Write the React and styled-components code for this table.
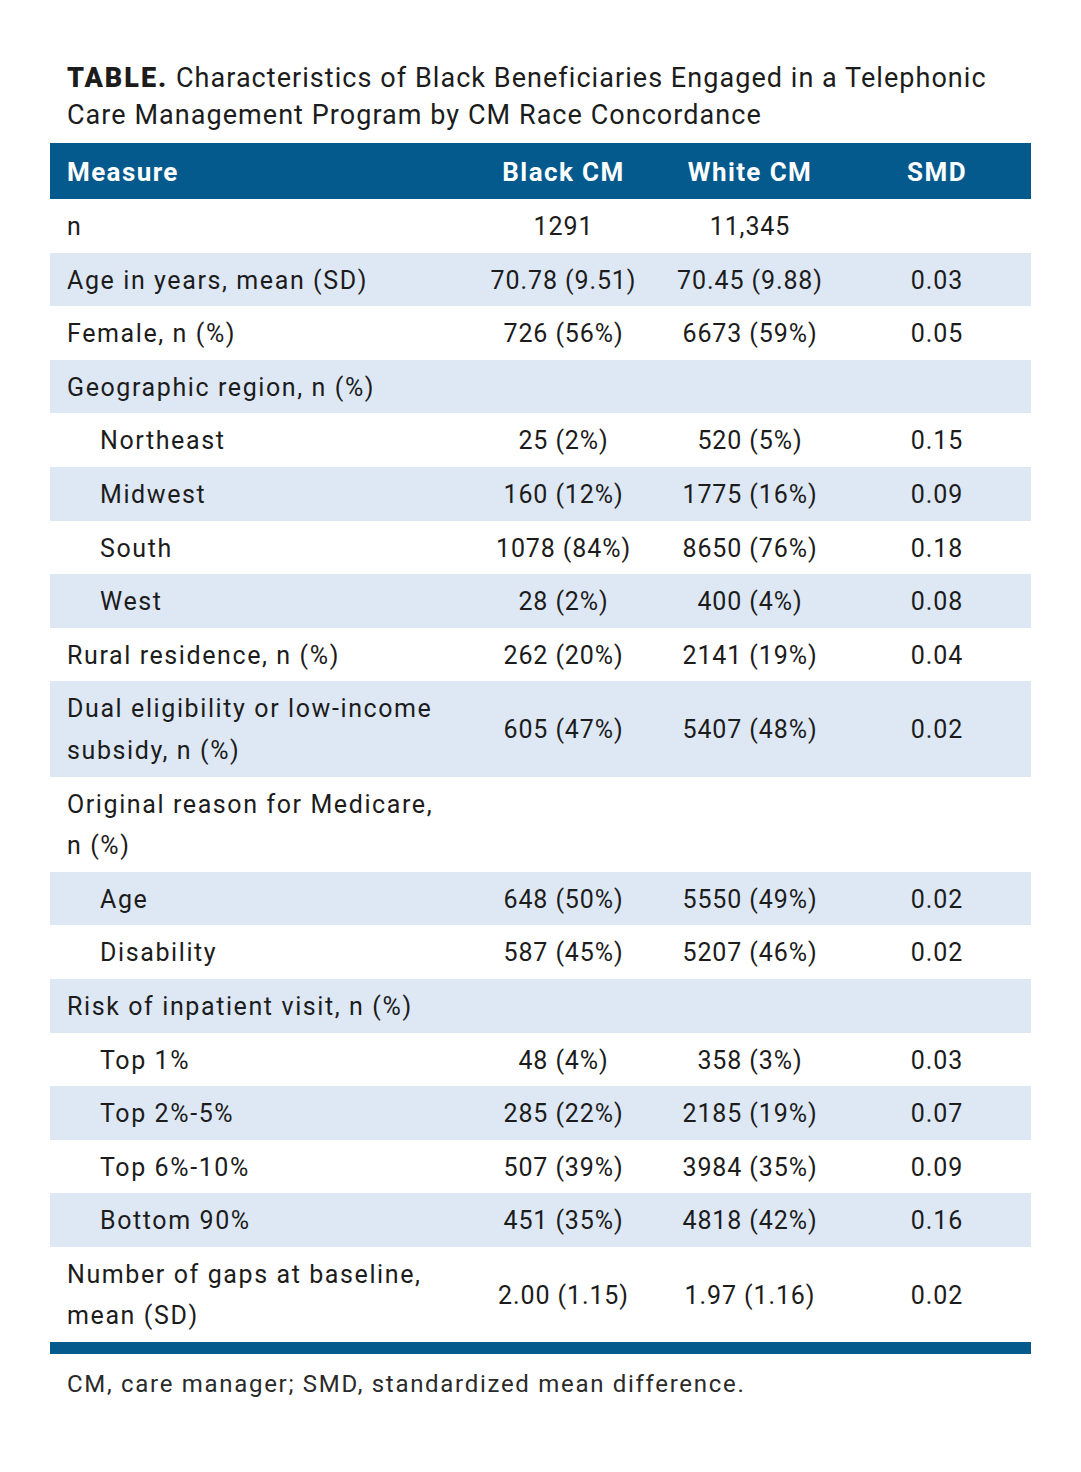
import React from "react";
import styled, { createGlobalStyle } from "styled-components";

const GlobalStyle = createGlobalStyle`
  body {
    margin: 0;
    background: #fff;
    font-family: Roboto, "Liberation Sans", sans-serif;
    color: #1c1c1c;
  }
`;

const Page = styled.div`
  width: 1081px;
  padding: 60px 50px 60px 50px;
  box-sizing: border-box;
`;

const Title = styled.h1`
  margin: 0 0 9px 17px;
  font-size: 27px;
  font-weight: 400;
  line-height: 37px;
  letter-spacing: 1.05px;
  color: #1c1c1c;
`;

const Label = styled.span`
  font-weight: 900;
  letter-spacing: 2px;
`;

const Table = styled.table`
  width: 981px;
  border-collapse: collapse;
  table-layout: fixed;
  border-bottom: 12px solid #045a8d;
`;

const HeadCell = styled.th`
  background: #045a8d;
  color: #fff;
  height: 55px;
  padding: 1px 0 0;
  padding-left: ${(p) => (p.$left ? "17px" : "0")};
  font-size: 26px;
  font-weight: 700;
  letter-spacing: 1.4px;
  text-align: ${(p) => (p.$left ? "left" : "center")};
`;

const Row = styled.tr`
  background: ${(p) => (p.$shade ? "#dee8f5" : "#fff")};
`;

const Cell = styled.td`
  padding: 7px 0 5px;
  line-height: 41.6px;
  font-size: 25px;
  letter-spacing: 0.9px;
  text-align: center;
`;

const MeasureCell = styled(Cell)`
  text-align: left;
  letter-spacing: 1.6px;
  padding-left: ${(p) => (p.$indent ? "50px" : "17px")};
`;

const Note = styled.p`
  margin: 16px 0 0 17px;
  font-size: 24px;
  letter-spacing: 1.7px;
  color: #2a2a2a;
`;

const rows = [
  ["n", "1291", "11,345", ""],
  ["Age in years, mean (SD)", "70.78 (9.51)", "70.45 (9.88)", "0.03"],
  ["Female, n (%)", "726 (56%)", "6673 (59%)", "0.05"],
  ["Geographic region, n (%)", "", "", ""],
  ["Northeast", "25 (2%)", "520 (5%)", "0.15", true],
  ["Midwest", "160 (12%)", "1775 (16%)", "0.09", true],
  ["South", "1078 (84%)", "8650 (76%)", "0.18", true],
  ["West", "28 (2%)", "400 (4%)", "0.08", true],
  ["Rural residence, n (%)", "262 (20%)", "2141 (19%)", "0.04"],
  [["Dual eligibility or low-income", "subsidy, n (%)"], "605 (47%)", "5407 (48%)", "0.02"],
  [["Original reason for Medicare,", "n (%)"], "", "", ""],
  ["Age", "648 (50%)", "5550 (49%)", "0.02", true],
  ["Disability", "587 (45%)", "5207 (46%)", "0.02", true],
  ["Risk of inpatient visit, n (%)", "", "", ""],
  ["Top 1%", "48 (4%)", "358 (3%)", "0.03", true],
  ["Top 2%-5%", "285 (22%)", "2185 (19%)", "0.07", true],
  ["Top 6%-10%", "507 (39%)", "3984 (35%)", "0.09", true],
  ["Bottom 90%", "451 (35%)", "4818 (42%)", "0.16", true],
  [["Number of gaps at baseline,", "mean (SD)"], "2.00 (1.15)", "1.97 (1.16)", "0.02"],
];

function App() {
  return (
    <Page>
      <GlobalStyle />
      <Title>
        <Label>TABLE.</Label> Characteristics of Black Beneficiaries Engaged in a Telephonic
        <br />
        Care Management Program by CM Race Concordance
      </Title>
      <Table>
        <colgroup>
          <col style={{ width: "420px" }} />
          <col style={{ width: "187px" }} />
          <col style={{ width: "186px" }} />
          <col style={{ width: "188px" }} />
        </colgroup>
        <thead>
          <tr>
            <HeadCell $left>Measure</HeadCell>
            <HeadCell>Black CM</HeadCell>
            <HeadCell>White CM</HeadCell>
            <HeadCell>SMD</HeadCell>
          </tr>
        </thead>
        <tbody>
          {rows.map(([measure, black, white, smd, indent], i) => (
            <Row key={i} $shade={i % 2 === 1}>
              <MeasureCell $indent={indent}>
                {Array.isArray(measure)
                  ? measure.map((line, j) => (
                      <React.Fragment key={j}>
                        {j > 0 && <br />}
                        {line}
                      </React.Fragment>
                    ))
                  : measure}
              </MeasureCell>
              <Cell>{black}</Cell>
              <Cell>{white}</Cell>
              <Cell>{smd}</Cell>
            </Row>
          ))}
        </tbody>
      </Table>
      <Note>CM, care manager; SMD, standardized mean difference.</Note>
    </Page>
  );
}

export default App;
